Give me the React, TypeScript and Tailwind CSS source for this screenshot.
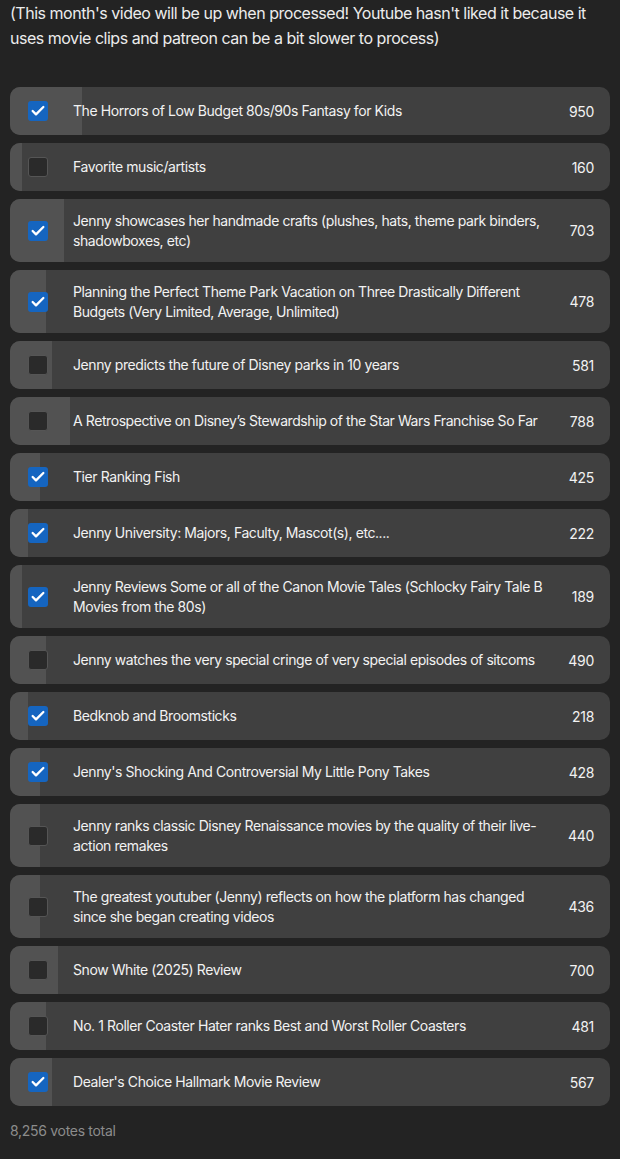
import { Check } from 'lucide-react';

interface PollOption {
  label: string;
  votes: number;
  checked: boolean;
}

const options: PollOption[] = [
  { label: 'The Horrors of Low Budget 80s/90s Fantasy for Kids', votes: 950, checked: true },
  { label: 'Favorite music/artists', votes: 160, checked: false },
  {
    label: 'Jenny showcases her handmade crafts (plushes, hats, theme park binders, shadowboxes, etc)',
    votes: 703,
    checked: true,
  },
  {
    label: 'Planning the Perfect Theme Park Vacation on Three Drastically Different Budgets (Very Limited, Average, Unlimited)',
    votes: 478,
    checked: true,
  },
  { label: 'Jenny predicts the future of Disney parks in 10 years', votes: 581, checked: false },
  {
    label: 'A Retrospective on Disney’s Stewardship of the Star Wars Franchise So Far',
    votes: 788,
    checked: false,
  },
  { label: 'Tier Ranking Fish', votes: 425, checked: true },
  { label: 'Jenny University: Majors, Faculty, Mascot(s), etc....', votes: 222, checked: true },
  {
    label: 'Jenny Reviews Some or all of the Canon Movie Tales (Schlocky Fairy Tale B Movies from the 80s)',
    votes: 189,
    checked: true,
  },
  {
    label: 'Jenny watches the very special cringe of very special episodes of sitcoms',
    votes: 490,
    checked: false,
  },
  { label: 'Bedknob and Broomsticks', votes: 218, checked: true },
  { label: "Jenny's Shocking And Controversial My Little Pony Takes", votes: 428, checked: true },
  {
    label: 'Jenny ranks classic Disney Renaissance movies by the quality of their live-action remakes',
    votes: 440,
    checked: false,
  },
  {
    label: 'The greatest youtuber (Jenny) reflects on how the platform has changed since she began creating videos',
    votes: 436,
    checked: false,
  },
  { label: 'Snow White (2025) Review', votes: 700, checked: false },
  { label: 'No. 1 Roller Coaster Hater ranks Best and Worst Roller Coasters', votes: 481, checked: false },
  { label: "Dealer's Choice Hallmark Movie Review", votes: 567, checked: true },
];

const total = 8256;

function PollRow({ label, votes, checked }: PollOption) {
  // bar width is the rounded share of all votes
  const pct = Math.round((votes / total) * 100);
  return (
    <div className="relative flex min-h-[48px] items-center overflow-hidden rounded-[10px] bg-[#404040] py-3 pl-[18px] pr-4">
      <div
        className="absolute inset-y-0 left-0 bg-[#525252]"
        style={{ width: `${pct}%` }}
      />
      <div className="relative flex w-full items-center">
        {checked ? (
          <span className="flex h-5 w-5 shrink-0 items-center justify-center rounded-[3px] bg-[#1565c0]">
            <Check className="h-4 w-4 text-white" strokeWidth={3.5} />
          </span>
        ) : (
          <span className="h-5 w-5 shrink-0 rounded-[3px] border border-[#555] bg-[#2a2a2a]" />
        )}
        <p className="ml-[25px] flex-1 pr-5 text-[14px] leading-[19.5px] tracking-[-0.42px] text-[#f2f2f2]">
          {label}
        </p>
        <span className="text-[14px] tracking-[-0.3px] text-[#f2f2f2]">{votes}</span>
      </div>
    </div>
  );
}

function App() {
  return (
    <div className="min-h-[1159px] bg-[#232323] px-[10px] pt-px font-['Inter',_'Liberation_Sans',_sans-serif]">
      <p className="text-[16px] leading-[25px] tracking-[-0.48px] text-[#ececec]">
        (This month's video will be up when processed! Youtube hasn't liked it because it uses movie clips and
        patreon can be a bit slower to process)
      </p>
      <div className="mt-[36px] flex flex-col gap-2">
        {options.map((o) => (
          <PollRow key={o.label} {...o} />
        ))}
      </div>
      <p className="mt-[14px] text-[14px] tracking-[-0.3px] text-[#8c8c8c]">8,256 votes total</p>
    </div>
  );
}

export default App;
